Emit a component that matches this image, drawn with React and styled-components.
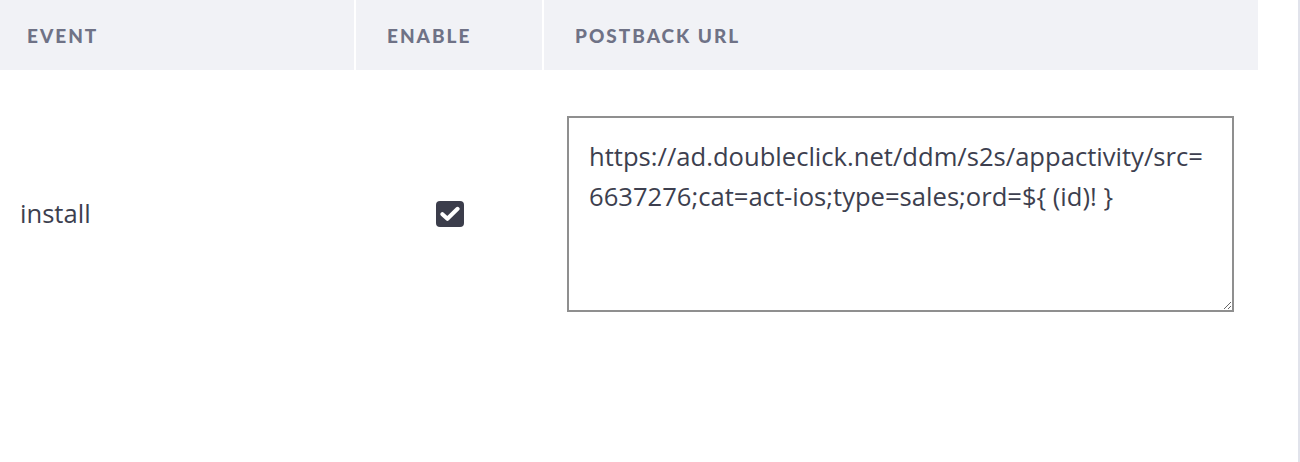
import React from 'react'
import styled, { createGlobalStyle } from 'styled-components'

const GlobalStyle = createGlobalStyle`
  body {
    margin: 0;
    background: #fff;
    font-family: 'Open Sans', 'Liberation Sans', sans-serif;
  }
`

const events = [
  {
    name: 'install',
    enabled: true,
    url: 'https://ad.doubleclick.net/ddm/s2s/appactivity/src=\n6637276;cat=act-ios;type=sales;ord=${ (id)! }',
  },
]

function App() {
  return (
    <Page>
      <GlobalStyle />
      <Table>
        <HeadRow>
          <HeadCell>Event</HeadCell>
          <HeadCell>Enable</HeadCell>
          <HeadCell>Postback URL</HeadCell>
        </HeadRow>
        {events.map((ev) => (
          <Row key={ev.name}>
            <EventCell>{ev.name}</EventCell>
            <CheckCell>
              <CheckBox checked={ev.enabled}>
                {ev.enabled && (
                  <svg width="20" height="16" viewBox="0 0 20 16">
                    <path d="M2.4 8.2 L7.4 12.8 L17.6 2.8" fill="none" stroke="#fff" strokeWidth="4" strokeLinecap="round" strokeLinejoin="round" />
                  </svg>
                )}
              </CheckBox>
            </CheckCell>
            <UrlCell>
              <UrlInput defaultValue={ev.url} />
            </UrlCell>
          </Row>
        ))}
      </Table>
    </Page>
  )
}

const Page = styled.div`
  display: flex;
  width: 1300px;
  min-height: 462px;
  border-right: 2px solid #e1e3eb;
  padding-right: 40px;
  box-sizing: border-box;
`

const Table = styled.div`
  width: 1258px;
`

const HeadRow = styled.div`
  display: grid;
  grid-template-columns: 354px 186px 1fr;
  column-gap: 2px;
  height: 70px;
`

const HeadCell = styled.div`
  display: flex;
  align-items: center;
  background: #f1f2f6;
  padding-left: 31px;
  font-family: 'Lato', 'Liberation Sans', sans-serif;
  font-size: 19px;
  font-weight: 900;
  letter-spacing: 2px;
  text-transform: uppercase;
  color: #6f7286;
  &:first-child {
    padding-left: 27px;
  }
`

const Row = styled.div`
  display: grid;
  grid-template-columns: 356px 188px 1fr;
  height: 287px;
  align-items: center;
`

const EventCell = styled.div`
  padding-left: 20px;
  font-size: 25.6px;
  color: #3d3f4f;
`

const CheckCell = styled.div`
  display: flex;
  justify-content: center;
`

const CheckBox = styled.span`
  display: flex;
  align-items: center;
  justify-content: center;
  width: 28px;
  height: 26px;
  border-radius: 4px;
  background: ${(p) => (p.checked ? '#3b3d4b' : '#fff')};
`

const UrlCell = styled.div`
  padding: 0 24px 0 23px;
`

const UrlInput = styled.textarea`
  display: block;
  width: 100%;
  height: 196px;
  box-sizing: border-box;
  border: 2px solid #8f8f8f;
  padding: 19px 20px;
  font-family: 'Open Sans', 'Liberation Sans', sans-serif;
  font-size: 25.6px;
  line-height: 40px;
  color: #3d3f4f;
  outline: none;
  resize: vertical;
`

export default App
